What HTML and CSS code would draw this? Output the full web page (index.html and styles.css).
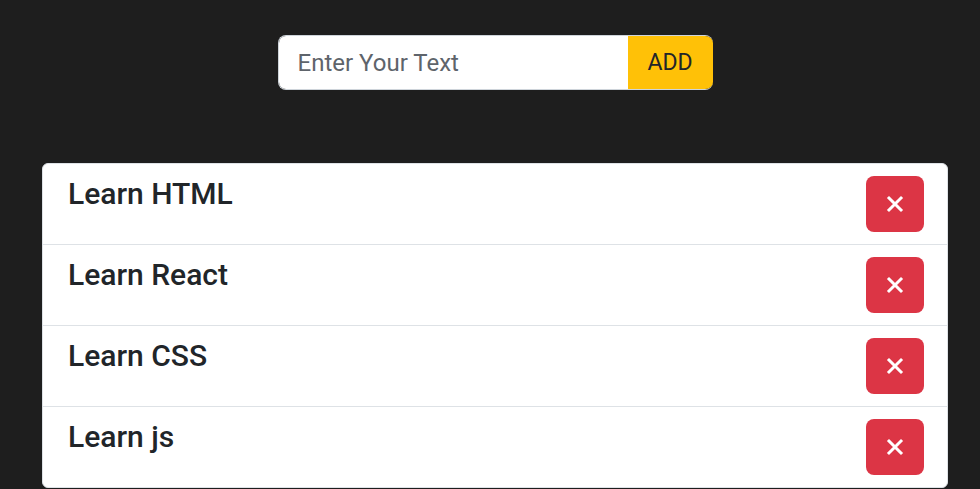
FILE: index.html
```html
<!DOCTYPE html>
<html>
<head>
<meta charset="utf-8">
<link rel="stylesheet" href="styles.css">
</head>
<body>
<div class="app">
  <div class="add-row">
    <div class="input-group">
      <input class="text-input" type="text" placeholder="Enter Your Text">
      <button class="add-btn">ADD</button>
    </div>
  </div>
  <ul class="todo-list">
    <li class="todo-item"><span class="todo-text">Learn HTML</span><button class="del-btn"><svg width="18" height="18" viewBox="0 0 18 18"><path d="M3 3 L15 15 M15 3 L3 15" stroke="#fff" stroke-width="3" stroke-linecap="square"/></svg></button></li>
    <li class="todo-item"><span class="todo-text">Learn React</span><button class="del-btn"><svg width="18" height="18" viewBox="0 0 18 18"><path d="M3 3 L15 15 M15 3 L3 15" stroke="#fff" stroke-width="3" stroke-linecap="square"/></svg></button></li>
    <li class="todo-item"><span class="todo-text">Learn CSS</span><button class="del-btn"><svg width="18" height="18" viewBox="0 0 18 18"><path d="M3 3 L15 15 M15 3 L3 15" stroke="#fff" stroke-width="3" stroke-linecap="square"/></svg></button></li>
    <li class="todo-item"><span class="todo-text">Learn js</span><button class="del-btn"><svg width="18" height="18" viewBox="0 0 18 18"><path d="M3 3 L15 15 M15 3 L3 15" stroke="#fff" stroke-width="3" stroke-linecap="square"/></svg></button></li>
  </ul>
</div>
</body>
</html>
```
FILE: styles.css
```css
* { box-sizing: border-box; }
html, body {
  margin: 0;
  padding: 0;
  background: #1e1e1e;
  font-family: Roboto, "Liberation Sans", sans-serif;
  overflow: hidden;
}
.app {
  padding: 35px 32px 0 42px;
}
.add-row {
  display: flex;
  justify-content: center;
}
.input-group {
  display: flex;
  height: 55px;
  width: 435px;
  border-radius: 8px;
  overflow: hidden;
  border: 1px solid #ced4da;
  border-right: none;
}
.text-input {
  flex: 1;
  border: none;
  outline: none;
  padding: 0 0 0 19px;
  font-family: Roboto, "Liberation Sans", sans-serif;
  font-size: 24px;
  color: #212529;
  background: #fff;
}
.text-input::placeholder {
  color: #5e646b;
}
.add-btn {
  width: 85px;
  border: none;
  background: #ffc107;
  color: #212529;
  font-family: Roboto, "Liberation Sans", sans-serif;
  font-size: 23px;
  padding: 0;
}
.todo-list {
  list-style: none;
  margin: 73px 0 0 0;
  padding: 0;
  width: 906px;
  background: #fff;
  border: 1px solid #dee2e6;
  border-radius: 6px;
}
.todo-item {
  display: flex;
  justify-content: space-between;
  align-items: flex-start;
  height: 81px;
  padding: 12px 23px 0 25px;
  border-top: 1px solid #dee2e6;
}
.todo-item:first-child {
  border-top: none;
  height: 80px;
}
.todo-text {
  font-size: 30px;
  font-weight: 500;
  color: #212529;
  line-height: 36px;
  margin-top: 0;
}
.del-btn {
  width: 58px;
  height: 56px;
  border: none;
  border-radius: 8px;
  background: #dc3545;
  display: flex;
  align-items: center;
  justify-content: center;
  padding: 0;
}
```
